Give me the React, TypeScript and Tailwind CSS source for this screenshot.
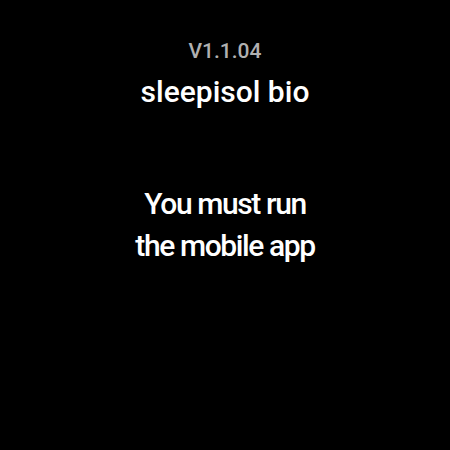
export default function App() {
  return (
    <div className="w-[450px] h-[450px] bg-black flex flex-col items-center font-['Roboto',sans-serif] font-medium text-white">
      <p className="mt-[39px] text-[21px] leading-[24px] text-[#b0b0b0]">V1.1.04</p>
      <h1 className="mt-[11px] text-[30px] leading-[36px]">sleepisol bio</h1>
      <p className="mt-[73px] text-[30px] leading-[42px] text-center tracking-[-1.4px]">
        You must run
        <br />
        the mobile app
      </p>
    </div>
  );
}
